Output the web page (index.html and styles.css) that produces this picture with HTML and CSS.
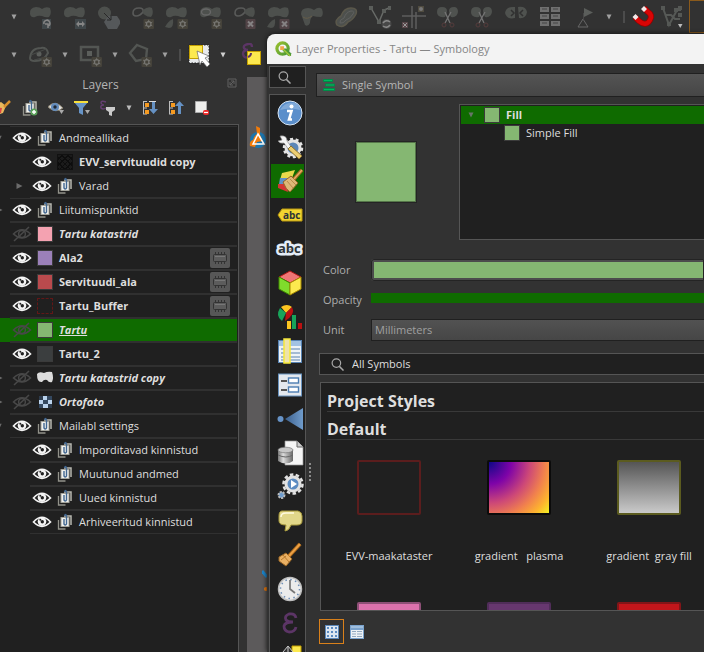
FILE: index.html
```html
<!DOCTYPE html>
<html lang="en">
<head>
<meta charset="utf-8">
<title>Layer Properties</title>
<link rel="stylesheet" href="styles.css">
</head>
<body>
<svg class="defs" aria-hidden="true">
  <defs>
    <linearGradient id="gCone" x1="0" x2="1" y1="0" y2="0"><stop offset="0" stop-color="#3d618e"/><stop offset="1" stop-color="#6f9bcb"/></linearGradient>
    <linearGradient id="gDb" x1="0" x2="1" y1="0" y2="0"><stop offset="0" stop-color="#777"/><stop offset=".35" stop-color="#ddd"/><stop offset="1" stop-color="#666"/></linearGradient>
    <linearGradient id="gQ" x1="0" x2="1" y1="0" y2="1"><stop offset="0" stop-color="#97bf2f"/><stop offset="1" stop-color="#4d9a35"/></linearGradient>
  </defs>
  <symbol id="blob" viewBox="0 0 24 24"><path d="M2 9Q1 3 8 2Q12 2 14 4Q18 1 22 3Q24 9 21 12Q18 13 14 11Q10 10 7 12Q3 13 2 9Z" fill="#4d504d"/></symbol>
  <symbol id="ring" viewBox="0 0 24 24"><path d="M3 8Q3 3 9 3Q14 3 13 7Q10 11 6 11Q3 11 3 8Z" fill="none" stroke="#595a59" stroke-width="1.6"/><path d="M13 5Q18 1 22 3Q24 9 21 12Q17 12 15 10Q12 9 13 5Z" fill="#4d504d"/></symbol>
  <symbol id="gear" viewBox="0 0 24 24"><rect x="13.500" y="14" width="10.500" height="10" rx="1" fill="#45423a"/><circle cx="18.700" cy="19" r="2.300" fill="none" stroke="#777672" stroke-width="1.200"/><path d="M18.700 14.800v8.400M15 17l7.400 4M22.400 17L15 21" stroke="#777672" stroke-width=".9"/><circle cx="18.700" cy="19" r="1.500" fill="#45423a"/></symbol>
  <symbol id="cross" viewBox="0 0 24 24"><rect x="13.500" y="14" width="10" height="10" rx="1" fill="#514346"/><path d="M16 16.500l5 5M21 16.500l-5 5" stroke="#858283" stroke-width="2"/></symbol>
  <symbol id="scissors" viewBox="0 0 24 24"><path d="M1 7q0-5 5-5 5 0 5 4 0 3-2 6-8 1-8-5ZM13 6q0-4 5-4 4 0 4 5-1 6-7 5-2-3-2-6Z" fill="#4f524f"/><path d="M9 7l5 11M15 7L9 18" stroke="#747474" stroke-width="1.300"/><circle cx="8" cy="20" r="2" fill="none" stroke="#553c3c"/><circle cx="16" cy="20" r="2" fill="none" stroke="#553c3c"/></symbol>
  <symbol id="down" viewBox="0 0 8 8"><path d="M1.500 1.500h5L4 6.500Z" fill="currentColor"/></symbol>
  <symbol id="right" viewBox="0 0 6 8"><path d="M0 1l6 3-6 3Z" fill="#6b6b6b"/></symbol>
  <symbol id="eye" viewBox="0 0 20 16"><path d="M1.500 8Q10-1.500 18.500 8Q10 16.500 1.500 8Z" fill="#202020" stroke="#f4f4f4" stroke-width="1.700"/><circle cx="10" cy="7.500" r="4.300" fill="#f4f4f4"/><circle cx="10.300" cy="7.800" r="1.700" fill="#202020"/><circle cx="8.300" cy="5.800" r="1" fill="#202020"/></symbol>
  <symbol id="eyeoff" viewBox="0 0 20 16"><path d="M1.500 8Q10-.5 18.500 8Q10 16 1.500 8ZM2 15L17 1" fill="none" stroke="#484848" stroke-width="1.600"/><circle cx="10" cy="8" r="3.400" fill="none" stroke="#484848" stroke-width="1.500"/></symbol>
  <symbol id="group" viewBox="0 0 18 18"><path d="M2.500 7v9h7" fill="none" stroke="#92928a" stroke-width="1.300"/><path d="M8 3h7v9" fill="none" stroke="#b8b8b0" stroke-width="1.500"/><rect x="5" y="4.500" width="8" height="9" fill="#f1f1ed" stroke="#a4a49c"/><path d="M8 6v5q1.500 2 2.500 0V3q-1-3-2 0" fill="none" stroke="#426791" stroke-width="1.400"/></symbol>
  <symbol id="chip" viewBox="0 0 20 20"><rect x="3.500" y="6.500" width="13" height="7" rx="1" fill="#5c5c5c" stroke="#333"/><path d="M5.500 4v2M8.500 4v2M11.500 4v2M14.500 4v2M5.500 14v2M8.500 14v2M11.500 14v2M14.500 14v2" stroke="#333"/><path d="M5 8.500h10" stroke="#777"/></symbol>
  <symbol id="magnifier" viewBox="0 0 14 14"><circle cx="5.800" cy="5.500" r="4.600" fill="none" stroke="#a8a8a8" stroke-width="1.300"/><path d="M9 9l4.500 4.500" stroke="#a8a8a8" stroke-width="1.600"/></symbol>
</svg>

<main class="app">
  <div class="toolbar edit" role="toolbar" aria-label="Advanced digitizing">
    <button class="drop first" aria-label="More"><svg><use href="#down"/></svg></button>
    <button class="tool" aria-label="Rotate feature"><svg viewBox="0 0 24 24"><use href="#blob"/><rect x="14" y="14" width="9" height="10" fill="#40474a"/><path d="M16 19a3 3 0 1 1 4 2M20 23v-4h-3" fill="none" stroke="#858585" stroke-width="1.500"/></svg></button>
    <button class="tool" aria-label="Scale feature"><svg viewBox="0 0 24 24"><use href="#blob"/><rect x="13" y="14" width="11" height="10" fill="#40474a"/><path d="M14 19l3-3v2h3v-2l3 3-3 3v-2h-3v2Z" fill="#858585"/></svg></button>
    <button class="tool" aria-label="Copy and move"><svg viewBox="0 0 24 24"><circle cx="8.500" cy="8" r="6.500" fill="#4d504d"/><path d="M12 11h9l4 6-4 7h-9l-4-7Z" fill="#55585a"/><path d="M8 8l7 7M15 11v4h-4" stroke="#292929" fill="none"/></svg></button>
    <button class="tool" aria-label="Add ring"><svg viewBox="0 0 24 24"><use href="#ring"/><use href="#gear"/></svg></button>
    <button class="tool" aria-label="Add part"><svg viewBox="0 0 24 24"><use href="#blob"/><path d="M1 22q3-6 8-8q1 9-4 9Z" fill="#4d504d"/><use href="#gear"/></svg></button>
    <button class="tool" aria-label="Fill ring"><svg viewBox="0 0 24 24"><use href="#blob"/><ellipse cx="8" cy="7" rx="4.500" ry="3" fill="#4d504d" stroke="#686868" stroke-width="1.400"/><use href="#gear"/></svg></button>
    <button class="tool" aria-label="Delete ring"><svg viewBox="0 0 24 24"><use href="#ring"/><use href="#cross"/></svg></button>
    <button class="tool" aria-label="Delete part"><svg viewBox="0 0 24 24"><use href="#blob"/><path d="M1 22q3-6 8-8q1 9-4 9Z" fill="#4d504d"/><use href="#cross"/></svg></button>
    <button class="tool" aria-label="Reshape"><svg viewBox="0 0 24 24"><path d="M1 9Q1 3 8 3q3 0 6 2 5-4 8-1 2 6-1 8-5 0-8-1-3 2-3 7-2 4-5 2Z" fill="#4d504d"/><path d="M3 12q4 3 9-1" fill="none" stroke="#655d4a"/></svg></button>
    <button class="tool" aria-label="Offset curve"><svg viewBox="0 0 24 24"><path d="M3 20Q0 15 7 11Q10 3 17 3Q24 3 22 9Q19 15 14 17Q9 24 3 20Z" fill="#4d504d" stroke="#5b584b" stroke-width="1.500"/><path d="M6 18q-1-3 4-5 2-6 7-7 4 0 2 3-3 5-7 6-3 4-6 3" fill="none" stroke="#606160"/></svg></button>
    <button class="tool" aria-label="Reverse line"><svg viewBox="0 0 24 24"><path d="M3 3l8 14 5-12 5-2" fill="none" stroke="#686b68" stroke-width="1.500"/><path d="M1 1h4v4H1ZM14 4h4v4h-4ZM20 1h3v4h-3ZM9 15h4v4H9Z" fill="#5b5e5b"/><circle cx="18.500" cy="19" r="5" fill="#484848"/><path d="M15 18q3-4 7-1M22 20q-3 4-7 1" stroke="#8b8b8b" stroke-width="1.500" fill="none"/></svg></button>
    <button class="tool" aria-label="Trim or extend"><svg viewBox="0 0 24 24"><path d="M0 11h24M10 1v22M14 7v17" stroke="#5e5e5e" stroke-width="1.500"/><rect x="0" y="17" width="6" height="6" fill="#58474a"/><path d="M1 18l4 4M5 18l-4 4" stroke="#999"/><rect x="16" y="1" width="6" height="6" fill="#504c40"/><circle cx="19" cy="4" r="2" fill="#777"/></svg></button>
    <button class="tool" aria-label="Split features"><svg><use href="#scissors"/></svg></button>
    <button class="tool" aria-label="Split parts"><svg><use href="#scissors"/></svg></button>
    <button class="tool" aria-label="Merge features"><svg viewBox="0 0 24 24"><path d="M11 2q-9-1-10 6 2 7 10 5ZM14 2q8-1 9 5-1 7-8 6Z" fill="#4f524f"/><path d="M7 5l3 3-3 3M19 5l-3 3 3 3" fill="none" stroke="#303030" stroke-width="1.500"/></svg></button>
    <button class="tool" aria-label="Merge attributes"><svg viewBox="0 0 24 24"><path d="M2 2h9v5H2ZM13 2h9v5h-9ZM2 9h9v5H2ZM13 9h9v5h-9ZM2 16h9v5H2ZM13 16h9v5h-9Z" fill="#707070"/><path d="M4 4h5M15 4h5M4 11h5M15 11h5M4 18h5M15 18h5" stroke="#444"/></svg></button>
    <button class="tool" aria-label="Rotate symbols"><svg viewBox="0 0 24 24"><path d="M12 3l9 4.500-9 4.500Z" fill="#5b5e5b"/><path d="M11 14l5 8H6Z" fill="none" stroke="#666"/><path d="M11.500 8v7" stroke="#484848"/></svg></button>
    <button class="drop" aria-label="More"><svg><use href="#down"/></svg></button>
    <span class="sep"></span>
    <button class="tool snug" aria-label="Enable snapping"><svg viewBox="0 0 24 24"><path d="M4 12l4 4q7 6 11-1 3-5-2-8l-4-4" fill="none" stroke="#970000" stroke-width="6"/><path d="M4 12l4 4q7 6 11-1 3-5-2-8l-4-4" fill="none" stroke="#d80505" stroke-width="4.500"/><path d="M1.500 12l3-3 3 3-3 3ZM10 4l3-3 3 3-3 3Z" fill="#f3e9e9"/></svg></button>
    <button class="tool" aria-label="Snapping mode"><svg viewBox="0 0 24 24"><path d="M3 3l6 17L17 5h4M6 10h5l4 4h5" fill="none" stroke="#565956" stroke-width="2"/><path d="M1 1h4v4H1ZM14 3h4v4h-4ZM18 1h4v4h-4ZM7 17h4v4H7ZM18 8h4v4h-4Z" fill="#555855"/><path d="M18 19h4.500l-2.250 4Z" fill="#bbb"/></svg></button>
    <button class="tool active" aria-label="Topological editing"></button>
  </div>

  <div class="toolbar shapes" role="toolbar" aria-label="Shapes and selection">
    <button class="drop first" aria-label="More"><svg><use href="#down"/></svg></button>
    <button class="tool" aria-label="Add ellipse"><svg viewBox="0 0 24 24"><path d="M2 15Q3 5 13 5q6-1 7 5-4 8-13 8-5 0-5-3Z" fill="none" stroke="#535653" stroke-width="2"/><circle cx="11" cy="11" r="2.500" fill="#5c5f5c"/><path d="M3 12l15-6M6 17l12-3" stroke="#484b48"/><use href="#gear"/></svg></button>
    <button class="drop" aria-label="More"><svg><use href="#down"/></svg></button>
    <button class="tool" aria-label="Add rectangle"><svg viewBox="0 0 24 24"><rect x="3" y="4" width="17" height="13" fill="none" stroke="#535653" stroke-width="2.500"/><path d="M9 8h5v5H9Z" fill="#5c5f5c"/><use href="#gear"/></svg></button>
    <button class="drop" aria-label="More"><svg><use href="#down"/></svg></button>
    <button class="tool" aria-label="Add polygon"><svg viewBox="0 0 24 24"><path d="M9 2l10 4-1 10-10 2-6-8Z" fill="none" stroke="#535653" stroke-width="2.400"/><use href="#gear"/></svg></button>
    <button class="drop" aria-label="More"><svg><use href="#down"/></svg></button>
    <span class="sep"></span>
    <button class="tool snug" aria-label="Select features"><svg viewBox="0 0 24 24"><rect x="2" y="2" width="20" height="18" fill="#e8eaec" stroke="#222" stroke-dasharray="1.500 1.500"/><rect x="2.500" y="2.500" width="13" height="13" fill="#fce94f" stroke="#c4a000"/><path d="M10 8l12 5-4 2 5 6-3 3-5-6-2 4Z" fill="#fff" stroke="#666" stroke-width=".7"/></svg></button>
    <button class="drop wide" aria-label="More"><svg><use href="#down"/></svg></button>
    <button class="tool" aria-label="Select by expression"><svg viewBox="0 0 24 24"><path d="M12 4q0-4-4-3-5 1-4 4 1 2 4 2-5 0-5 4 1 5 6 3 3-1 3-4" fill="none" stroke="#5c3566" stroke-width="2.400"/><rect x="7.500" y="8.500" width="13" height="13" fill="#fce94f" stroke="#c4a000"/><path d="M8 14q3-1 3-4" fill="none" stroke="#5c3566" stroke-width="2"/></svg></button>
  </div>

  <div class="workspace">
    <section class="layers" aria-label="Layers">
      <header class="dock-title"><h2>Layers</h2><button class="float" aria-label="Float panel"><svg viewBox="0 0 10 10"><path d="M1 1h8v8H1ZM3 7l4-4M4 3h3v3M3 4v3h3" fill="none" stroke="#606060"/></svg></button></header>
      <div class="layer-tools" role="toolbar" aria-label="Layer tools">
        <button aria-label="Layer styling"><svg viewBox="0 0 18 18"><path d="M1 5l5-2 5 4-3 7-6 2Z" fill="#e9b95d"/><path d="M1 8l6 1-1 5H1Z" fill="#d44"/><path d="M9 8l6-6" stroke="#d8902c" stroke-width="2.500"/></svg></button>
        <button aria-label="Add group"><svg viewBox="0 0 18 18"><use href="#group"/><circle cx="13" cy="13" r="3.500" fill="#5aa05a"/><path d="M13 11v4M11 13h4" stroke="#fff" stroke-width="1.500"/></svg></button>
        <button aria-label="Map themes"><svg viewBox="0 0 18 18"><path d="M1 8q7-8 15 1-7 6-15-1Z" fill="#dedede" stroke="#88806c"/><circle cx="8" cy="8" r="4" fill="#638cbd"/><circle cx="8" cy="8" r="1.700" fill="#202a35"/><path d="M12 11h5l-2.500 4Z" fill="#aaa"/></svg></button>
        <button aria-label="Filter legend"><svg viewBox="0 0 18 18"><path d="M1 3h14l-5 6v7l-4-2V9Z" fill="#6794c7"/><path d="M1 2h14v2H1Z" fill="#f7df3b"/><path d="M12 11h5l-2.500 4Z" fill="#aaa"/></svg></button>
        <button aria-label="Filter by expression"><svg viewBox="0 0 18 18"><path d="M7 3Q2 1 2 4q1 2 3 2-4 0-3 3 2 2 5 0" fill="none" stroke="#633e70" stroke-width="1.500"/><path d="M7 8h9v3l-3 2v4l-3-1v-3L7 11Z" fill="#cacaca"/></svg></button>
        <button class="more" aria-label="More"><svg viewBox="0 0 8 8"><use href="#down"/></svg></button>
        <button aria-label="Expand all"><svg viewBox="0 0 18 18"><path d="M2.500 2v13M2 2.500h4M2 9h4M2 15h4" stroke="#bdbdbd"/><path d="M4 4h4v4H4ZM4 11h4v4H4Z" fill="#f59a21"/><path d="M8 2.500h7" stroke="#ddd"/><path d="M11 3h3v7h3l-4.500 5L8 10h3Z" fill="#6591c3"/></svg></button>
        <button aria-label="Collapse all"><svg viewBox="0 0 18 18"><path d="M2.500 2v13M2 2.500h4M2 9h4M2 15h4" stroke="#bdbdbd"/><path d="M4 4h4v4H4ZM4 11h4v4H4Z" fill="#f59a21"/><path d="M11 15h3V7h3l-4.500-5L8 7h3Z" fill="#6591c3"/></svg></button>
        <button aria-label="Remove layer"><svg viewBox="0 0 18 18"><path d="M2.500 2.500h11v11h-11Z" fill="#eeeeec" stroke="#aaa"/><rect x="10" y="11" width="6" height="5" rx="2" fill="#ef2929"/><path d="M11 13.500h4" stroke="#fff" stroke-width="1.200"/></svg></button>
      </div>

      <ul class="tree">
        <li><button class="twist" aria-label="Collapse"><svg><use href="#down"/></svg></button><div class="row"><button class="vis" aria-label="Hide"><svg><use href="#eye"/></svg></button><svg class="ico"><use href="#group"/></svg><span>Andmeallikad</span></div></li>
        <li class="child bold"><span class="twist"></span><div class="row"><button class="vis" aria-label="Hide"><svg><use href="#eye"/></svg></button><i class="swatch hatch"></i><span>EVV_servituudid copy</span></div></li>
        <li class="child"><button class="twist" aria-label="Expand"><svg><use href="#right"/></svg></button><div class="row"><button class="vis" aria-label="Hide"><svg><use href="#eye"/></svg></button><svg class="ico"><use href="#group"/></svg><span>Varad</span></div></li>
        <li><button class="twist" aria-label="Expand"><svg><use href="#right"/></svg></button><div class="row"><button class="vis" aria-label="Hide"><svg><use href="#eye"/></svg></button><svg class="ico"><use href="#group"/></svg><span>Liitumispunktid</span></div></li>
        <li class="bold hidden-layer"><span class="twist"></span><div class="row"><button class="vis" aria-label="Show"><svg><use href="#eyeoff"/></svg></button><i class="swatch pink"></i><span>Tartu katastrid</span></div></li>
        <li class="bold"><span class="twist"></span><div class="row"><button class="vis" aria-label="Hide"><svg><use href="#eye"/></svg></button><i class="swatch violet"></i><span>Ala2</span><button class="memory" aria-label="Temporary layer"><svg><use href="#chip"/></svg></button></div></li>
        <li class="bold"><span class="twist"></span><div class="row"><button class="vis" aria-label="Hide"><svg><use href="#eye"/></svg></button><i class="swatch red"></i><span>Servituudi_ala</span><button class="memory" aria-label="Temporary layer"><svg><use href="#chip"/></svg></button></div></li>
        <li class="bold"><span class="twist"></span><div class="row"><button class="vis" aria-label="Hide"><svg><use href="#eye"/></svg></button><i class="swatch dashed"></i><span>Tartu_Buffer</span><button class="memory" aria-label="Temporary layer"><svg><use href="#chip"/></svg></button></div></li>
        <li class="bold hidden-layer selected"><span class="twist"></span><div class="row"><button class="vis" aria-label="Show"><svg><use href="#eyeoff"/></svg></button><i class="swatch green"></i><span>Tartu</span></div></li>
        <li class="bold"><span class="twist"></span><div class="row"><button class="vis" aria-label="Hide"><svg><use href="#eye"/></svg></button><i class="swatch slate"></i><span>Tartu_2</span></div></li>
        <li class="bold hidden-layer"><button class="twist" aria-label="Expand"><svg><use href="#right"/></svg></button><div class="row"><button class="vis" aria-label="Show"><svg><use href="#eyeoff"/></svg></button><svg class="ico" viewBox="0 0 18 18"><path d="M1 5q2-3 7-1 4-2 8-1 2 6 0 10-3 1-5-2-3-1-5 2-5 1-5-8Z" fill="#dcdcdc"/></svg><span>Tartu katastrid copy</span></div></li>
        <li class="bold hidden-layer"><button class="twist" aria-label="Expand"><svg><use href="#right"/></svg></button><div class="row"><button class="vis" aria-label="Show"><svg><use href="#eyeoff"/></svg></button><svg class="ico" viewBox="0 0 18 18"><path d="M3 3h13v12H3Z" fill="#34485f"/><path d="M7 3h4v4H7ZM3 7h4v4H3ZM12 7h4v4h-4ZM7 11h5v4H7Z" fill="#b9d2ec"/><path d="M3 3h4v4H3ZM12 11h4v4h-4Z" fill="#2d3b4c"/></svg><span>Ortofoto</span></div></li>
        <li><button class="twist" aria-label="Collapse"><svg><use href="#down"/></svg></button><div class="row"><button class="vis" aria-label="Hide"><svg><use href="#eye"/></svg></button><svg class="ico"><use href="#group"/></svg><span>Mailabl settings</span></div></li>
        <li class="child"><span class="twist"></span><div class="row"><button class="vis" aria-label="Hide"><svg><use href="#eye"/></svg></button><svg class="ico"><use href="#group"/></svg><span>Imporditavad kinnistud</span></div></li>
        <li class="child"><span class="twist"></span><div class="row"><button class="vis" aria-label="Hide"><svg><use href="#eye"/></svg></button><svg class="ico"><use href="#group"/></svg><span>Muutunud andmed</span></div></li>
        <li class="child"><span class="twist"></span><div class="row"><button class="vis" aria-label="Hide"><svg><use href="#eye"/></svg></button><svg class="ico"><use href="#group"/></svg><span>Uued kinnistud</span></div></li>
        <li class="child"><span class="twist"></span><div class="row"><button class="vis" aria-label="Hide"><svg><use href="#eye"/></svg></button><svg class="ico"><use href="#group"/></svg><span>Arhiveeritud kinnistud</span></div></li>
      </ul>
    </section>
    <div class="map">
      <svg class="marker" viewBox="0 0 18 24"><circle cx="9" cy="15" r="8" fill="#1b75ae"/><path d="M7 1l4 2v7l3 6-6 1-2 5-5-1q-1-5 3-6 1-4 4-6Z" fill="#f57c08"/><path d="M9 9l6 10H4Z" fill="none" stroke="#fff" stroke-width="1.500"/></svg>
      <svg class="marker low" viewBox="0 0 6 24"><path d="M0 1l5 6" stroke="#1b86cd" stroke-width="3"/><circle cx="4" cy="19" r="2" fill="#f57c08"/></svg>
    </div>
  </div>
</main>

<section class="dialog" role="dialog" aria-labelledby="dialog-title">
  <header class="titlebar">
    <svg viewBox="0 0 18 18"><circle cx="8" cy="8" r="6" fill="none" stroke="url(#gQ)" stroke-width="3.400"/><path d="M8 8h4l5 5v3h-3l-6-6Z" fill="#4f9b38"/><path d="M5.500 5.500h4v4h-4Z" fill="#f3a64a"/><path d="M9 9l7 7" stroke="#a4c93a" stroke-width="1.500"/></svg>
    <h1 id="dialog-title">Layer Properties - Tartu — Symbology</h1>
  </header>
  <div class="dialog-body">
    <nav class="side" aria-label="Property pages">
      <button class="side-search" aria-label="Search"><svg><use href="#magnifier"/></svg></button>
      <div class="pages">
        <button aria-label="Information"><svg viewBox="0 0 26 26"><circle cx="13" cy="13" r="12" fill="#5b8fcb" stroke="#d7e4f2"/><path d="M3 10Q8 1 18 3q5 2 5 7-10-3-20 0Z" fill="#80a9d8"/><circle cx="14.500" cy="6.500" r="2" fill="#fff"/><path d="M10 11h4.500l-2.500 8.500h3" fill="none" stroke="#fff" stroke-width="2.600"/></svg></button>
        <button aria-label="Source"><svg viewBox="0 0 26 26"><circle cx="16" cy="14" r="7" fill="#5c87b8" stroke="#e4e4e4" stroke-width="3"/><circle cx="16" cy="14" r="9" fill="none" stroke="#e4e4e4" stroke-width="2.500" stroke-dasharray="3 2.600"/><path d="M3 2q7-1 7 5l5 7-3 2-5-7q-4 1-6-2l4-1Z" fill="#f4f4f4" stroke="#888" stroke-width=".6"/><path d="M11 15l3-3 11 10-3 3Z" fill="#edce72" stroke="#8c7331"/></svg></button>
        <button class="current" aria-label="Symbology"><svg viewBox="0 0 26 26"><path d="M5 5l13-3-3 8-12 2Z" fill="#e8d84b"/><path d="M3 10h9v6H2Z" fill="#5e91c9"/><path d="M1 16h8l2 8-10-4Z" fill="#d43434"/><path d="M6 14l8-6 7 7-8 9q-4-2-7-10Z" fill="#deb777" stroke="#946224"/><path d="M10 13l6 7M13 11l6 6" stroke="#b98c4c"/><path d="M17 11l8-9" stroke="#a96a28" stroke-width="3.500"/><path d="M17 11l8-9" stroke="#ecae61" stroke-width="1.400"/></svg></button>
        <button aria-label="Labels"><svg viewBox="0 0 26 26"><path d="M1 13l4-6h20v12H5Z" fill="#f3d530" stroke="#b99811"/><text x="6" y="17" class="abc small">abc</text></svg></button>
        <button aria-label="Masks"><svg viewBox="0 0 26 26"><text x="1" y="17" class="abc halo">abc</text></svg></button>
        <button aria-label="3D view"><svg viewBox="0 0 26 26"><path d="M13 1l11 6-11 6L2 7Z" fill="#f07575" stroke="#b01616"/><path d="M2 7l11 6v12L2 19Z" fill="#80dc2c" stroke="#408900"/><path d="M24 7l-11 6v12l11-6Z" fill="#fce94f" stroke="#a88a00"/></svg></button>
        <button aria-label="Diagrams"><svg viewBox="0 0 26 26"><path d="M9 9L4 3q6-4 11 0Z" fill="#fcc520"/><path d="M9 9L3 4q-5 8 2 13Z" fill="#18a45a"/><path d="M9 9l6-6q4 7-7 14Z" fill="#bb1111"/><path d="M10 17h4v8h-4Z" fill="#fcc520"/><path d="M15 11h4v14h-4Z" fill="#18a45a"/><path d="M21 19h4v6h-4Z" fill="#bb1111"/></svg></button>
        <button aria-label="Fields"><svg viewBox="0 0 26 26"><rect x="1.500" y="2.500" width="23" height="22" fill="#eef3f7" stroke="#5783b3"/><path d="M2 3h22v5H2Z" fill="#a2c2e3"/><path d="M4 11h19M4 15h19M4 19h19M4 22h19" stroke="#8aa8c8" stroke-width="1.600"/><rect x="7" y="1" width="6" height="24" fill="#eee3a9" stroke="#f6e838" stroke-width="1.500"/></svg></button>
        <button aria-label="Attributes form"><svg viewBox="0 0 26 26"><rect x="1.500" y="2" width="23" height="22" fill="#e3e8ee" stroke="#6993bf"/><path d="M4 9h6M4 18h6" stroke="#555" stroke-width="2"/><rect x="11.500" y="6" width="10" height="5" fill="#fff" stroke="#4c7db1" stroke-width="1.400"/><rect x="11.500" y="15" width="10" height="5" fill="#fff" stroke="#4c7db1" stroke-width="1.400"/></svg></button>
        <button aria-label="Joins"><svg viewBox="0 0 26 26"><circle cx="3.500" cy="13" r="3" fill="#6793c7"/><path d="M8 13L26 2v22Z" fill="url(#gCone)"/></svg></button>
        <button aria-label="Auxiliary storage"><svg viewBox="0 0 26 26"><path d="M8 1h12l6 6v18H8Z" fill="#f5f5f5" stroke="#999" stroke-width=".7"/><path d="M20 1v6h6" fill="#ccc" stroke="#666"/><path d="M1 10v11q8 5 15 0V10Z" fill="url(#gDb)"/><ellipse cx="8.500" cy="10" rx="7.500" ry="2.800" fill="#c7c7c7" stroke="#777" stroke-width=".7"/><path d="M1 15q8 4 15 0" fill="none" stroke="#666"/></svg></button>
        <button aria-label="Actions"><svg viewBox="0 0 26 26"><circle cx="16" cy="10" r="9.500" fill="none" stroke="#e2e2e2" stroke-width="2.500" stroke-dasharray="3.500 2.400"/><circle cx="16" cy="10" r="7" fill="#5b8bc1" stroke="#e2e2e2" stroke-width="3"/><path d="M14 6l6 4-6 4Z" fill="#fff"/><circle cx="4.500" cy="21" r="3" fill="#6e9dcf" stroke="#bbb" stroke-width="2" stroke-dasharray="2 1"/></svg></button>
        <button aria-label="Display"><svg viewBox="0 0 26 26"><path d="M5 3h16q4 1 4 5v5q0 4-5 4h-6q-2 6-6 6l1-6q-7 0-7-4V8q0-5 3-5Z" fill="#e1d78a" stroke="#a89a3c"/><path d="M4 9q0-4 5-4h8" fill="none" stroke="#fffbe0" stroke-width="1.500"/></svg></button>
        <button aria-label="Rendering"><svg viewBox="0 0 26 26"><path d="M2 15l7-4 6 6-6 7-7-5Z" fill="#e9b064" stroke="#9a6624"/><path d="M6 13l6 7M4 18l5-4" stroke="#b97a2d"/><path d="M12 14L23 2" stroke="#a46318" stroke-width="4"/><path d="M12 14L23 2" stroke="#eca044" stroke-width="2"/></svg></button>
        <button aria-label="Temporal"><svg viewBox="0 0 26 26"><circle cx="13" cy="13" r="11.500" fill="#ececec" stroke="#bebebe" stroke-width="1.500"/><circle cx="13" cy="13" r="9.500" fill="none" stroke="#6b8db6" stroke-width="1.500" stroke-dasharray="1.500 3.470"/><path d="M13 4v9l5 4" fill="none" stroke="#777" stroke-width="1.700"/></svg></button>
        <button aria-label="Variables"><svg viewBox="0 0 26 26"><path d="M19 8q-1-5-7-4-5 2-3 6 2 2 7 2-8 0-9 4 0 5 5 6 6 0 7-5" fill="none" stroke="#5c3566" stroke-width="2.800"/></svg></button>
        <button aria-label="Metadata"><svg viewBox="0 0 26 26"><path d="M15 2h9v15h-9Z" fill="#fce94f" stroke="#c4a000"/><path d="M6 8l5-6 5 6-3 6H9Z" fill="#333" stroke="#ccc"/><path d="M11 3v7" stroke="#ccc"/></svg></button>
      </div>
    </nav>
    <span class="splitter"></span>

    <form class="symbology">
      <div class="renderer"><svg viewBox="0 0 14 14"><path d="M1.500 1.500h9v2h-9ZM3.500 6h9v2h-9ZM1.500 10.500h11v2h-11Z" fill="#00b85c" stroke="#008b48"/></svg><select aria-label="Renderer"><option>Single Symbol</option></select></div>
      <div class="symbol">
        <div class="preview"><i></i></div>
        <ul class="symbol-tree">
          <li class="on"><svg class="arrow"><use href="#down"/></svg><i class="swatch green"></i><span>Fill</span></li>
          <li class="sub"><i class="swatch green"></i><span>Simple Fill</span></li>
        </ul>
      </div>
      <div class="props">
        <label for="color">Color</label><button type="button" id="color" class="color" aria-label="Color"></button>
        <label for="opacity">Opacity</label><input id="opacity" type="range" value="100">
        <label for="unit">Unit</label><select id="unit"><option>Millimeters</option></select>
      </div>
      <div class="find"><svg><use href="#magnifier"/></svg><input type="text" aria-label="Filter symbols" value="All Symbols"></div>
      <div class="styles">
        <h3>Project Styles</h3>
        <h3>Default</h3>
        <div class="grid">
          <figure><i class="thumb outline"></i><figcaption>EVV-maakataster</figcaption></figure>
          <figure><i class="thumb plasma"></i><figcaption>gradient   plasma</figcaption></figure>
          <figure><i class="thumb gray"></i><figcaption>gradient  gray fill</figcaption></figure>
          <figure><i class="thumb rose"></i></figure>
          <figure><i class="thumb purple"></i></figure>
          <figure><i class="thumb crimson"></i></figure>
        </div>
      </div>
      <div class="views">
        <button type="button" class="view pressed" aria-label="Icon view"><svg viewBox="0 0 14 14"><path d="M0 0h14v14H0Z" fill="#5c88b9"/><path d="M1 1h12v12H1Z" fill="#dde7f1"/><path d="M2 2h2v2H2ZM6 2h2v2H6ZM10 2h2v2h-2ZM2 6h2v2H2ZM6 6h2v2H6ZM10 6h2v2h-2ZM2 10h2v2H2ZM6 10h2v2H6ZM10 10h2v2h-2Z" fill="#5c8cc2"/></svg></button>
        <button type="button" class="view" aria-label="List view"><svg viewBox="0 0 14 14"><path d="M0 0h14v14H0Z" fill="#7ba3cd"/><path d="M1 5h12v8H1Z" fill="#edf1f5"/><path d="M1 2h12" stroke="#c5daee"/><path d="M2 6.500h4M7 6.500h5M2 9h4M7 9h5M2 11.500h4M7 11.500h5" stroke="#93a9c0"/></svg></button>
      </div>
    </form>
  </div>
</section>
</body>
</html>
```
FILE: styles.css
```css
* { box-sizing: border-box; }
body {
  margin: 0;
  height: 100vh;
  overflow: hidden;
  background: #323232;
  color: #dedede;
  font: 11px/16px "Open Sans", "Noto Sans", sans-serif;
}
button, select, input { font: inherit; color: inherit; border: 0; padding: 0; margin: 0; background: none; border-radius: 0; appearance: none; outline: 0; }
h1, h2, h3, ul, figure { margin: 0; padding: 0; font-weight: 400; list-style: none; }
svg { display: block; flex: none; }
i { display: block; flex: none; }
.defs { position: absolute; width: 0; height: 0; }

/* main window */
.app { height: 100%; display: flex; flex-direction: column; }
.toolbar { display: flex; align-items: center; flex: none; overflow: hidden; }
.toolbar button { display: flex; align-items: center; justify-content: center; flex: none; height: 100%; }
.edit { height: 34px; padding-bottom: 1px; }
.shapes { height: 42px; }
.tool { width: 34px; }
.tool svg { width: 24px; height: 24px; }
.tool.snug { width: 24px; }
.tool.active { border: 1px solid #8a5a1c; }
.drop { width: 16px; color: #a0a0a0; }
.drop svg { width: 8px; height: 8px; }
.drop.first { width: 23px; padding-left: 4px; }
.drop.wide { width: 24px; color: #d0d0d0; }
.sep { flex: none; width: 14px; height: 12px; background: linear-gradient(#4c4c4c, #4c4c4c) center / 2px 100% no-repeat; }

.workspace { flex: 1; min-height: 0; display: flex; }
.layers { width: 239px; flex: none; display: flex; flex-direction: column; }
.dock-title { display: flex; align-items: center; height: 18px; padding-right: 2px; color: #b4b4b4; }
.dock-title h2 { flex: 1; font-size: 12px; text-align: center; margin-right: 26px; }
.float { margin-bottom: 4px; }
.float svg { width: 10px; height: 10px; }
.layer-tools { height: 30px; display: flex; align-items: center; gap: 8px; padding-bottom: 2px; margin-left: -5px; }
.layer-tools svg { width: 18px; height: 18px; }
.layer-tools .more { color: #bbb; }
.layer-tools .more svg { width: 8px; height: 8px; }
.tree { flex: 1; background: #202020; border: solid #555; border-width: 1px 1px 0 0; padding: 1px 1px 0 0; }
.tree li { display: flex; height: 24px; }
.twist { width: 10px; flex: none; display: flex; align-items: center; justify-content: flex-end; padding-right: 7px; color: #6b6b6b; }
.twist svg { width: 7px; height: 8px; }
.child .twist { width: 30px; }
.row { flex: 1; display: flex; align-items: center; padding: 0 7px 0 2px; border: solid #303030; border-width: 1px 0; }
.vis svg { width: 20px; height: 16px; }
.vis { margin-right: 4px; }
.ico { width: 18px; height: 18px; }
.row span { margin-left: 5px; white-space: nowrap; }
.bold .row span { font-weight: 700; }
.hidden-layer .row span { font-style: italic; }
.selected { background: #0f6b00; }
.selected span { text-decoration: underline; }
.memory { margin-left: auto; background: #575757; border-radius: 2px; }
.memory svg { width: 20px; height: 20px; }
.swatch { width: 16px; height: 16px; margin: 1px; border: 1px solid #3b3b3b; }
.hatch { background: repeating-linear-gradient(45deg, #0d0d0d 0 1px, transparent 1px 4px), repeating-linear-gradient(-45deg, #0d0d0d 0 1px, transparent 1px 4px), #1b1b1b; border-color: #111; }
.pink { background: #f4a2b1; }
.violet { background: #9b80b9; }
.red { background: #b94a4d; }
.dashed { border: 1px dashed #621717; }
.green { background: #85b772; }
.slate { background: #3b3e3f; }

.map { flex: 1; margin: 1px 0 0 8px; background: #5c5a5b; position: relative; }
.marker { position: absolute; left: 2px; top: 48px; width: 18px; height: 24px; }
.marker.low { left: 15px; top: 493px; width: 6px; }

/* properties dialog */
.dialog { position: absolute; inset: 34px 0 0 267px; display: flex; flex-direction: column; background: #323232; border-radius: 8px 0 0 0; overflow: hidden; box-shadow: 0 0 5px #111; }
.titlebar { height: 30px; flex: none; display: flex; align-items: center; gap: 4px; padding-left: 8px; background: #f3f3f3; color: #858585; }
.titlebar svg { width: 17px; height: 17px; }
.titlebar h1 { font-size: 11px; white-space: nowrap; }
.dialog-body { flex: 1; min-height: 0; display: flex; padding-left: 2px; }
.side { width: 37px; flex: none; display: flex; flex-direction: column; gap: 6px; padding-top: 2px; }
.side-search { height: 22px; flex: none; padding: 0 0 0 8px; background: #202020; border: 1px solid #555; }
.side-search svg { width: 13px; height: 13px; }
.pages { flex: 1; min-height: 0; overflow: hidden; background: #202020; border: 1px solid #555; border-bottom: 0; padding: 1px; }
.pages button { display: flex; width: 100%; height: 34px; align-items: center; justify-content: center; padding-left: 4px; }
.pages svg { width: 26px; height: 26px; overflow: visible; }
.pages .current { background: #0f6b00; }
.abc { font: 700 13px "Open Sans", sans-serif; fill: #2e3436; }
.abc.small { font-size: 10px; }
.abc.halo { stroke: #e5edf7; stroke-width: 5px; stroke-linejoin: round; paint-order: stroke; }
.splitter { align-self: center; flex: none; width: 2px; height: 18px; margin: 228px 0 0 3px; background: repeating-linear-gradient(#8b8b8b 0 2px, transparent 2px 4px); }

.symbology { flex: 1; min-width: 0; padding: 9px 0 0 5px; display: flex; flex-direction: column; }
.renderer { flex: none; display: flex; align-items: center; height: 24px; padding-left: 5px; gap: 6px; background: linear-gradient(#545454, #464646); border: 1px solid #202020; border-right: 0; color: #b5b5b5; }
.renderer svg { width: 14px; height: 14px; }
.renderer select { flex: 1; }
.symbol { display: flex; margin-top: 7px; height: 136px; flex: none; }
.preview { width: 143px; flex: none; display: flex; align-items: center; justify-content: center; padding-right: 4px; }
.preview i { width: 60px; height: 60px; background: #85b772; border: 1px solid #557649; outline: 1px solid #242424; }
.symbol-tree { flex: 1; background: #202020; border: 1px solid #555; border-right: 0; padding: 1px 0 0 1px; }
.symbol-tree li { display: flex; align-items: center; height: 18px; gap: 6px; }
.symbol-tree .swatch { margin: 0; }
.symbol-tree .on { background: #0f6b00; font-weight: 700; padding-left: 6px; }
.symbol-tree .arrow { width: 8px; height: 8px; margin-right: 3px; color: #687568; }
.symbol-tree .sub { padding-left: 43px; }
.props { display: grid; grid-template-columns: 48px 1fr; align-items: center; grid-auto-rows: 22px; row-gap: 8px; margin-top: 19px; padding-left: 7px; color: #adadad; }
.color { height: 22px; background: #85b772; border: 3px solid #4c4c4c; border-right: 0; outline: 1px solid #242424; outline-offset: -1px; border-radius: 3px 0 0 3px; }
#opacity { width: 100%; height: 10px; margin-bottom: 4px; background: #0f6b00; }
#opacity::-webkit-slider-thumb { appearance: none; width: 0; }
#unit { height: 22px; padding-left: 3px; background: linear-gradient(#525252, #464646); border: 1px solid #202020; border-right: 0; color: #a0a0a0; }
.find { flex: none; display: flex; align-items: center; gap: 8px; height: 22px; margin: 12px 0 0 3px; padding-left: 11px; background: #202020; border: 1px solid #555; border-right: 0; }
.find svg { width: 13px; height: 13px; }
.find input { flex: 1; min-width: 0; }
.styles { flex: 1; min-height: 0; margin: 7px 0 0 4px; padding: 5px 0 0 6px; overflow: hidden; background: #202020; border: 1px solid #555; border-right: 0; }
.styles h3 { height: 24px; margin-bottom: 4px; border-bottom: 1px solid #393939; font-size: 16px; line-height: 26px; font-weight: 700; }
.grid { display: grid; grid-template-columns: repeat(3, 130px); grid-auto-rows: 142px; padding-top: 16px; margin-left: -3px; }
.grid figure { display: flex; flex-direction: column; align-items: center; gap: 33px; }
.grid figcaption { white-space: pre; }
.thumb { width: 64px; height: 55px; border: 2px solid transparent; border-radius: 2px; background-clip: padding-box; }
.outline { border-color: #5b1d1d; }
.plasma { border-color: #0b0b0b; background-image: radial-gradient(circle at 0 0, #0d0887 0, #7e03a8 22px, #cc4778 41px, #f1814d 56px, #fdb32f 68px, #f0f921 80px); }
.gray { border-color: #5b5b1f; background-image: linear-gradient(#555, #cacaca); }
.rose { border-color: #8e5077; background-color: #dc72ad; }
.purple { border-color: #502d59; background-color: #67376f; }
.crimson { border-color: #821518; background-color: #c2161b; }
.views { flex: none; display: flex; height: 41px; padding: 8px 0 0 3px; }
.view { width: 25px; height: 25px; display: flex; align-items: center; justify-content: center; }
.view.pressed { border: 1px solid #d9801a; }
.view svg { width: 14px; height: 14px; }
```
